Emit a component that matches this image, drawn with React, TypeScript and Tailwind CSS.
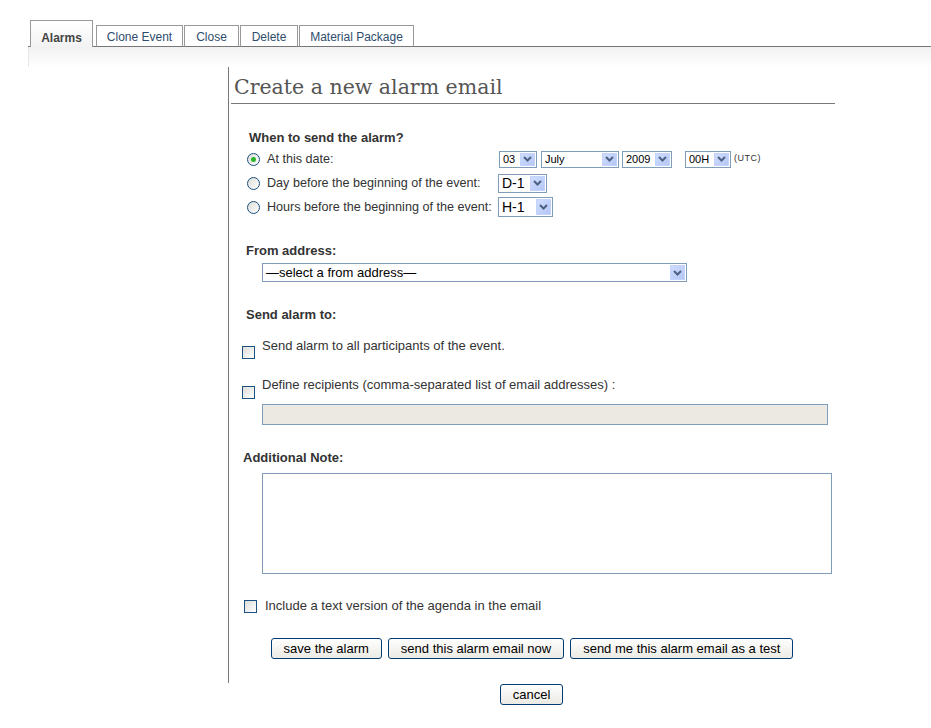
import React from 'react'

const body = { fontFamily: '"Liberation Sans", Arial, sans-serif' }

function Arrow({ className }: { className: string }) {
    return (
        <div className={`flex items-center justify-center border border-[#c3d3fd] bg-gradient-to-br from-[#cfdcfd] to-[#b4c7f5] ${className}`}>
            <svg width="9" height="6" viewBox="0 0 9 6">
                <path d="M1 1 L4.5 4.5 L8 1" fill="none" stroke="#4d6185" strokeWidth="2" />
            </svg>
        </div>
    )
}

function Select({ text, box, textCls, arrow }: { text: string; box: string; textCls: string; arrow: string }) {
    return (
        <div className={`flex items-center justify-between border border-[#7f9db9] bg-white pl-[3px] pr-[1px] ${box}`}>
            <span className={`text-black leading-none whitespace-nowrap ${textCls}`}>{text}</span>
            <Arrow className={arrow} />
        </div>
    )
}

function Radio({ checked }: { checked?: boolean }) {
    return (
        <div className="w-[13px] h-[13px] rounded-full border border-[#1c5180] bg-gradient-to-br from-[#dcdcd7] to-white flex items-center justify-center shrink-0">
            {checked && <div className="w-[5px] h-[5px] rounded-full bg-[#2bb52b]" />}
        </div>
    )
}

function Check({ className = '' }: { className?: string }) {
    return <div className={`w-[13px] h-[13px] border border-[#1c5180] bg-gradient-to-br from-[#dcdcd7] to-white shrink-0 ${className}`} />
}

function Button({ children }: { children: React.ReactNode }) {
    return (
        <button className="h-[21px] px-[12px] border border-[#003c74] rounded-[3px] bg-gradient-to-b from-white to-[#ebeae4] text-[13px] leading-none text-black whitespace-nowrap">
            {children}
        </button>
    )
}

export default function App() {
    const tabs = [
        { label: 'Clone Event', w: 'w-[87px]', gap: 'w-[3px]' },
        { label: 'Close', w: 'w-[55px]', gap: 'w-px' },
        { label: 'Delete', w: 'w-[58px]', gap: 'w-px' },
        { label: 'Material Package', w: 'w-[115px]', gap: 'w-px' },
    ]

    return (
        <div className="w-[931px] h-[728px] bg-white overflow-hidden text-[13px] text-[#333]" style={body}>
            <div className="pl-[28px] pt-[20px]">
                {/* Tabs */}
                <div className="flex items-end text-[12px]">
                    <div className="w-[2px] h-px bg-[#777]" />
                    <div className="w-[63px] h-[27px] pb-[2px] flex items-end justify-center border border-b-0 border-[#999] bg-gradient-to-b from-white to-[#f2f2f2] font-bold text-[#444] leading-[14px]">
                        Alarms
                    </div>
                    {tabs.map(t => (
                        <React.Fragment key={t.label}>
                            <div className={`${t.gap} h-px bg-[#777]`} />
                            <div className={`${t.w} h-[22px] pb-[2px] flex items-end justify-center border border-[#999] border-b-[#777] bg-white text-[#2f4d6d] leading-[14px]`}>
                                {t.label}
                            </div>
                        </React.Fragment>
                    ))}
                    <div className="flex-1 h-px bg-[#777]" />
                </div>
                {/* Panel fade */}
                <div className="h-[20px] bg-gradient-to-b from-[#f1f1f1] to-white border-l border-[#e6e6e6]" />

                <div className="flex">
                    <div className="w-[200px] shrink-0" />
                    <div className="w-[607px]">
                        <div className="border-l border-[#777] pb-[24px]">
                            <h1
                                className="ml-[2px] pl-[3px] pt-[7px] pb-[3px] border-b border-[#777] text-[20.5px] leading-[26px] text-[#555]"
                                style={{ fontFamily: '"DejaVu Serif", "Liberation Serif", serif' }}
                            >
                                Create a new alarm email
                            </h1>

                            <div className="pl-[17px]">
                                {/* When to send */}
                                <div className="mt-[27px] ml-[3px] font-bold leading-[14px]">When to send the alarm?</div>
                                <div className="mt-[2px] flex flex-col text-[12.6px]">
                                    <div className="flex items-center h-[24px] pl-[1px]">
                                        <Radio checked />
                                        <span className="ml-[7px] w-[231px] whitespace-nowrap leading-[14px]">At this date:</span>
                                        <div className="flex items-center">
                                            <Select text="03" box="w-[38px] h-[17px] ml-[1px]" textCls="text-[11px]" arrow="w-[15px] h-[13px]" />
                                            <Select text="July" box="w-[78px] h-[17px] ml-[4px]" textCls="text-[11px]" arrow="w-[15px] h-[13px]" />
                                            <Select text="2009" box="w-[50px] h-[17px] ml-[3px]" textCls="text-[11px]" arrow="w-[15px] h-[13px]" />
                                            <Select text="00H" box="w-[46px] h-[17px] ml-[13px]" textCls="text-[11px]" arrow="w-[15px] h-[13px]" />
                                            <span className="ml-[3px] text-[9px] tracking-[0.5px] text-[#333]">(UTC)</span>
                                        </div>
                                    </div>
                                    <div className="flex items-center h-[24px] pl-[1px]">
                                        <Radio />
                                        <span className="ml-[7px] w-[231px] whitespace-nowrap leading-[14px]">Day before the beginning of the event:</span>
                                        <Select text="D-1" box="w-[49px] h-[19px]" textCls="text-[14px]" arrow="w-[15px] h-[15px]" />
                                    </div>
                                    <div className="flex items-center h-[24px] pl-[1px]">
                                        <Radio />
                                        <span className="ml-[7px] w-[231px] whitespace-nowrap leading-[14px]">Hours before the beginning of the event:</span>
                                        <Select text="H-1" box="w-[55px] h-[20px]" textCls="text-[14px]" arrow="w-[15px] h-[16px]" />
                                    </div>
                                </div>

                                {/* From address */}
                                <div className="mt-[25px] font-bold leading-[14px]">From address:</div>
                                <Select text="—select a from address—" box="mt-[5px] ml-[16px] w-[425px] h-[19px]" textCls="text-[13px] text-black" arrow="w-[15px] h-[15px]" />

                                {/* Send alarm to */}
                                <div className="mt-[26px] font-bold leading-[14px]">Send alarm to:</div>
                                <div className="mt-[17px] flex items-start -ml-[4px]">
                                    <Check className="mt-[7px]" />
                                    <span className="ml-[7px] leading-[14px]">Send alarm to all participants of the event.</span>
                                </div>
                                <div className="mt-[19px] flex items-start -ml-[4px]">
                                    <Check className="mt-[8px]" />
                                    <span className="ml-[7px] leading-[14px]">Define recipients (comma-separated list of email addresses) :</span>
                                </div>
                                <div className="mt-[5px] ml-[16px] w-[566px] h-[21px] border border-[#7f9db9] bg-[#ebe9e1]" />

                                {/* Additional note */}
                                <div className="mt-[26px] -ml-[3px] font-bold leading-[14px]">Additional Note:</div>
                                <div className="mt-[8px] ml-[16px] w-[570px] h-[101px] border border-[#7f9db9] bg-white" />

                                <div className="mt-[25px] -ml-[2px] flex items-center">
                                    <Check />
                                    <span className="ml-[8px] leading-[14px]">Include a text version of the agenda in the email</span>
                                </div>
                            </div>

                            <div className="mt-[25px] flex justify-center gap-[6px]">
                                <Button>save the alarm</Button>
                                <Button>send this alarm email now</Button>
                                <Button>send me this alarm email as a test</Button>
                            </div>
                        </div>
                        <div className="mt-[1px] flex justify-center">
                            <Button>cancel</Button>
                        </div>
                    </div>
                </div>
            </div>
        </div>
    )
}
